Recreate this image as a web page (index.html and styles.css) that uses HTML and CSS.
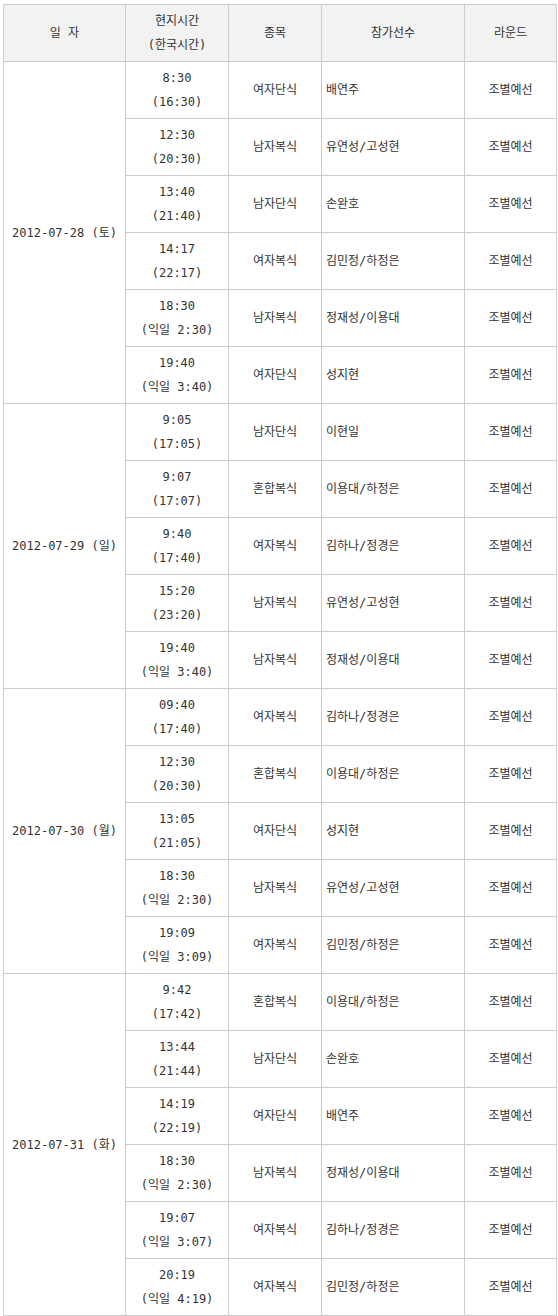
FILE: index.html
```html
<!DOCTYPE html>
<html lang="ko">
<head>
<meta charset="utf-8">
<link rel="stylesheet" href="styles.css">
</head>
<body>
<table class="sched">
<colgroup>
<col class="c-date"><col class="c-time"><col class="c-event"><col class="c-player"><col class="c-round">
</colgroup>
<thead>
<tr><th>일 자</th><th>현지시간<br>(한국시간)</th><th>종목</th><th>참가선수</th><th>라운드</th></tr>
</thead>
<tbody>
<tr><td rowspan="6">2012-07-28 (토)</td><td>8:30<br>(16:30)</td><td>여자단식</td><td class="pl">배연주</td><td>조별예선</td></tr>
<tr><td>12:30<br>(20:30)</td><td>남자복식</td><td class="pl">유연성/고성현</td><td>조별예선</td></tr>
<tr><td>13:40<br>(21:40)</td><td>남자단식</td><td class="pl">손완호</td><td>조별예선</td></tr>
<tr><td>14:17<br>(22:17)</td><td>여자복식</td><td class="pl">김민정/하정은</td><td>조별예선</td></tr>
<tr><td>18:30<br>(익일 2:30)</td><td>남자복식</td><td class="pl">정재성/이용대</td><td>조별예선</td></tr>
<tr><td>19:40<br>(익일 3:40)</td><td>여자단식</td><td class="pl">성지현</td><td>조별예선</td></tr>
<tr><td rowspan="5">2012-07-29 (일)</td><td>9:05<br>(17:05)</td><td>남자단식</td><td class="pl">이현일</td><td>조별예선</td></tr>
<tr><td>9:07<br>(17:07)</td><td>혼합복식</td><td class="pl">이용대/하정은</td><td>조별예선</td></tr>
<tr><td>9:40<br>(17:40)</td><td>여자복식</td><td class="pl">김하나/정경은</td><td>조별예선</td></tr>
<tr><td>15:20<br>(23:20)</td><td>남자복식</td><td class="pl">유연성/고성현</td><td>조별예선</td></tr>
<tr><td>19:40<br>(익일 3:40)</td><td>남자복식</td><td class="pl">정재성/이용대</td><td>조별예선</td></tr>
<tr><td rowspan="5">2012-07-30 (월)</td><td>09:40<br>(17:40)</td><td>여자복식</td><td class="pl">김하나/정경은</td><td>조별예선</td></tr>
<tr><td>12:30<br>(20:30)</td><td>혼합복식</td><td class="pl">이용대/하정은</td><td>조별예선</td></tr>
<tr><td>13:05<br>(21:05)</td><td>여자단식</td><td class="pl">성지현</td><td>조별예선</td></tr>
<tr><td>18:30<br>(익일 2:30)</td><td>남자복식</td><td class="pl">유연성/고성현</td><td>조별예선</td></tr>
<tr><td>19:09<br>(익일 3:09)</td><td>여자복식</td><td class="pl">김민정/하정은</td><td>조별예선</td></tr>
<tr><td rowspan="6">2012-07-31 (화)</td><td>9:42<br>(17:42)</td><td>혼합복식</td><td class="pl">이용대/하정은</td><td>조별예선</td></tr>
<tr><td>13:44<br>(21:44)</td><td>남자단식</td><td class="pl">손완호</td><td>조별예선</td></tr>
<tr><td>14:19<br>(22:19)</td><td>여자단식</td><td class="pl">배연주</td><td>조별예선</td></tr>
<tr><td>18:30<br>(익일 2:30)</td><td>남자복식</td><td class="pl">정재성/이용대</td><td>조별예선</td></tr>
<tr><td>19:07<br>(익일 3:07)</td><td>여자복식</td><td class="pl">김하나/정경은</td><td>조별예선</td></tr>
<tr><td>20:19<br>(익일 4:19)</td><td>여자복식</td><td class="pl">김민정/하정은</td><td>조별예선</td></tr>
</tbody>
</table>
</body>
</html>
```

FILE: styles.css
```css
html, body {
  margin: 0;
  padding: 0;
  background: #ffffff;
}
body {
  padding: 4px 0 0 3px;
  font-family: "DejaVu Sans Mono", "Noto Sans CJK KR", monospace;
  font-size: 12px;
  color: #333333;
}
.sched {
  border-collapse: collapse;
  table-layout: fixed;
  width: 554px;
}
.c-date { width: 122px; }
.c-time { width: 103px; }
.c-event { width: 93px; }
.c-player { width: 143px; }
.c-round { width: 92px; }
.sched th,
.sched td {
  border: 1px solid #cccccc;
  text-align: center;
  vertical-align: middle;
  padding: 0 4px;
  line-height: 24px;
  height: 57px;
  box-sizing: border-box;
  font-weight: normal;
}
.sched th {
  background: #f2f2f2;
}
.sched td.pl {
  text-align: left;
  padding-left: 4px;
}
```
